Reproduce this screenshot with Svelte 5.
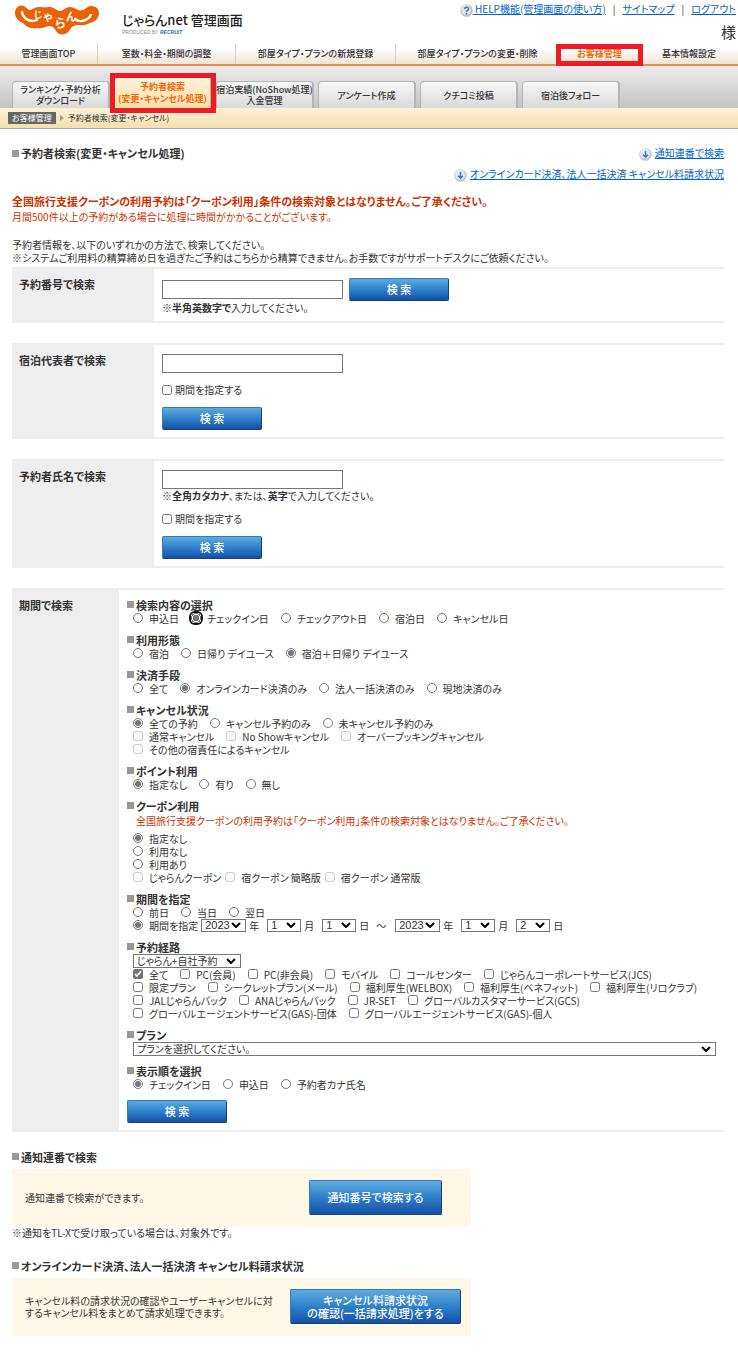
<script>
  // グローバルナビ
  const navItems = [
    { label: '管理画面TOP' },
    { label: '室数・料金・期間の調整' },
    { label: '部屋タイプ・プランの新規登録' },
    { label: '部屋タイプ・プランの変更・削除' },
    { label: 'お客様管理', current: true },
    { label: '基本情報設定' }
  ];

  // お客様管理のタブ
  const tabs = [
    { lines: ['ランキング・予約分析', 'ダウンロード'] },
    { lines: ['予約者検索', '(変更・キャンセル処理)'], current: true },
    { lines: ['宿泊実績(NoShow処理)', '入金管理'] },
    { lines: ['アンケート作成'] },
    { lines: ['クチコミ投稿'] },
    { lines: ['宿泊後フォロー'] }
  ];

  let target = $state('チェックイン日');
  let usage = $state('宿泊＋日帰り デイユース');
  let payment = $state('オンラインカード決済のみ');
  let cancel = $state('全ての予約');
  let point = $state('指定なし');
  let coupon = $state('指定なし');
  let period = $state('期間を指定');
  let order = $state('チェックイン日');

  const targets = ['申込日', 'チェックイン日', 'チェックアウト日', '宿泊日', 'キャンセル日'];
  const usages = ['宿泊', '日帰り デイユース', '宿泊＋日帰り デイユース'];
  const payments = ['全て', 'オンラインカード決済のみ', '法人一括決済のみ', '現地決済のみ'];
  const cancels = ['全ての予約', 'キャンセル予約のみ', '未キャンセル予約のみ'];
  const cancelTypes = [
    ['通常キャンセル', 'No Showキャンセル', 'オーバーブッキングキャンセル'],
    ['その他の宿責任によるキャンセル']
  ];
  const points = ['指定なし', '有り', '無し'];
  const coupons = ['指定なし', '利用なし', '利用あり'];
  const couponTypes = ['じゃらんクーポン', '宿クーポン 簡略版', '宿クーポン 通常版'];
  const orders = ['チェックイン日', '申込日', '予約者カナ氏名'];
  const routes = [
    ['全て', 'PC(会員)', 'PC(非会員)', 'モバイル', 'コールセンター', 'じゃらんコーポレートサービス(JCS)'],
    ['限定プラン', 'シークレットプラン(メール)', '福利厚生(WELBOX)', '福利厚生(ベネフィット)', '福利厚生(リロクラブ)'],
    ['JALじゃらんパック', 'ANAじゃらんパック', 'JR-SET', 'グローバルカスタマーサービス(GCS)'],
    ['グローバルエージェントサービス(GAS)-団体', 'グローバルエージェントサービス(GAS)-個人']
  ];

  const range = (n) => Array.from({ length: n }, (_, i) => i + 1);
</script>

{#snippet arrowIcon()}
  <svg class="ball" viewBox="0 0 13 13" aria-hidden="true">
    <circle cx="6.5" cy="6.5" r="6.3" fill="#c8c8c8" />
    <circle cx="6" cy="5.7" r="5" fill="#e8e8e8" />
    <path d="M6.5 3v6M4 6.8l2.5 2.4L9 6.8" fill="none" stroke="#2a78c8" stroke-width="1.5" />
  </svg>
{/snippet}

{#snippet dateSelects(name, day)}
  <select class="year" aria-label="{name}年"><option>2023</option><option>2024</option></select>
  <span class="unit">年</span>
  <select class="md" aria-label="{name}月">{#each range(12) as m}<option>{m}</option>{/each}</select>
  <span class="unit">月</span>
  <select class="md" aria-label="{name}日" value={day}>{#each range(31) as d}<option value={d}>{d}</option>{/each}</select>
  <span>日</span>
{/snippet}

<header>
  <div class="top">
    <svg class="logo" viewBox="0 0 84 30" role="img" aria-label="じゃらん">
      <path
        d="M0 8C0 2 5-1 9 1C12 3 13 5 15 5C18 5 19 2 24 2C28 2 30 3 33 2C38 1 41 6 45 6C49 6 50 2 55 2C60 2 63 7 68 5C71 4 72 1 76 1C81 1 84 4 84 8C84 14 79 17 75 18C70 21 66 20 62 20C57 21 56 23 54 26C51 30 44 31 41 26C39 22 37 21 34 21C29 22 27 24 22 23C16 24 11 22 8 18C3 16 0 12 0 8Z"
        fill="#ec6105" />
      <path d="M7 7C8 13 14 18 22 15M60 14C65 18 72 16 76 10" fill="none" stroke="#fff" stroke-width="2.400" stroke-linecap="round" />
      <text x="19" y="13" font-size="9">じ</text>
      <text x="28" y="16" font-size="11">ゃ</text>
      <text x="40" y="23" font-size="12">ら</text>
      <text x="51" y="16" font-size="11">ん</text>
    </svg>
    <div class="title">
      <p class="site">じゃらんnet 管理画面</p>
      <p class="by">PRODUCED BY <b>RECRUIT</b></p>
    </div>
    <div class="util">
      <ul>
        <li>
          <svg class="ball" viewBox="0 0 13 13" aria-hidden="true">
            <circle cx="6.5" cy="6.5" r="6.3" fill="#bcc2c8" />
            <circle cx="6" cy="5.7" r="5" fill="#e0e4e7" />
            <path d="M4.600 5C4.600 2.600 8.500 2.600 8.500 5C8.500 6.500 6.500 6.400 6.500 8M6.500 9v1.500" fill="none" stroke="#3a7fc0" stroke-width="1.500" />
          </svg><a href="#help">&nbsp;HELP機能(管理画面の使い方)</a>
        </li>
        <li><a href="#sitemap">サイトマップ</a></li>
        <li><a href="#logout">ログアウト</a></li>
      </ul>
      <p class="user">様</p>
    </div>
  </div>

  <nav class="global">
    {#each navItems as item}
      <a href="#nav" class:current={item.current}>{item.label}</a>
    {/each}
  </nav>

  <nav class="tabs">
    {#each tabs as tab}
      <a href="#tab" class:current={tab.current}>
        {#each tab.lines as line}<span>{line}</span>{/each}
      </a>
    {/each}
  </nav>

  <div class="crumbs">
    <b>お客様管理</b>
    <svg viewBox="0 0 4 6" aria-hidden="true"><path d="M0 0L4 3L0 6Z" fill="#999" /></svg>
    <span>予約者検索(変更・キャンセル)</span>
  </div>
</header>

<main>
  <div class="head">
    <h1 class="mark">予約者検索(変更・キャンセル処理)</h1>
    <ul class="jump">
      <li>{@render arrowIcon()}<a href="#notice">通知連番で検索</a></li>
      <li>{@render arrowIcon()}<a href="#charge">オンラインカード決済、法人一括決済 キャンセル料請求状況</a></li>
    </ul>
  </div>

  <p class="alert strong">全国旅行支援クーポンの利用予約は「クーポン利用」条件の検索対象とはなりません。ご了承ください。</p>
  <p class="alert">月間500件以上の予約がある場合に処理に時間がかかることがございます。</p>
  <p class="lead">予約者情報を、以下のいずれかの方法で、検索してください。<br />※システムご利用料の精算締め日を過ぎたご予約はこちらから精算できません。お手数ですがサポートデスクにご依頼ください。</p>

  <section class="box">
    <h2><label for="number">予約番号で検索</label></h2>
    <div class="cell">
      <div class="line">
        <input type="text" id="number" />
        <button class="btn">検 索</button>
      </div>
      <p class="note">※<b>半角英数字で</b>入力してください。</p>
    </div>
  </section>

  <section class="box">
    <h2><label for="guest">宿泊代表者で検索</label></h2>
    <div class="cell">
      <input type="text" id="guest" />
      <label class="limit"><input type="checkbox" />期間を指定する</label>
      <button class="btn">検 索</button>
    </div>
  </section>

  <section class="box">
    <h2><label for="booker">予約者氏名で検索</label></h2>
    <div class="cell">
      <input type="text" id="booker" />
      <p class="note">※<b>全角カタカナ</b>、または、<b>英字</b>で入力してください。</p>
      <label class="limit"><input type="checkbox" />期間を指定する</label>
      <button class="btn">検 索</button>
    </div>
  </section>

  <section class="box period">
    <h2>期間で検索</h2>
    <div class="cell">
      <h3 class="mark">検索内容の選択</h3>
      <div class="row">
        {#each targets as t}
          <label class:focused={t === target}><input type="radio" name="target" value={t} bind:group={target} />{t}</label>
        {/each}
      </div>

      <h3 class="mark">利用形態</h3>
      <div class="row">
        {#each usages as u}
          <label><input type="radio" name="usage" value={u} bind:group={usage} />{u}</label>
        {/each}
      </div>

      <h3 class="mark">決済手段</h3>
      <div class="row">
        {#each payments as p}
          <label><input type="radio" name="payment" value={p} bind:group={payment} />{p}</label>
        {/each}
      </div>

      <h3 class="mark">キャンセル状況</h3>
      <div class="row">
        {#each cancels as c}
          <label><input type="radio" name="cancel" value={c} bind:group={cancel} />{c}</label>
        {/each}
      </div>
      {#each cancelTypes as row}
        <div class="row">
          {#each row as c}
            <label><input type="checkbox" disabled />{c}</label>
          {/each}
        </div>
      {/each}

      <h3 class="mark">ポイント利用</h3>
      <div class="row">
        {#each points as p}
          <label><input type="radio" name="point" value={p} bind:group={point} />{p}</label>
        {/each}
      </div>

      <h3 class="mark">クーポン利用</h3>
      <p class="alert inner">全国旅行支援クーポンの利用予約は「クーポン利用」条件の検索対象とはなりません。ご了承ください。</p>
      {#each coupons as c}
        <div class="row">
          <label><input type="radio" name="coupon" value={c} bind:group={coupon} />{c}</label>
        </div>
      {/each}
      <div class="row tight">
        {#each couponTypes as c}
          <label><input type="checkbox" disabled />{c}</label>
        {/each}
      </div>

      <h3 class="mark">期間を指定</h3>
      <div class="row">
        {#each ['前日', '当日', '翌日'] as d}
          <label><input type="radio" name="period" value={d} bind:group={period} />{d}</label>
        {/each}
      </div>
      <div class="row dates">
        <label><input type="radio" name="period" value="期間を指定" bind:group={period} />期間を指定</label>
        {@render dateSelects('開始', 1)}
        <span class="tilde">～</span>
        {@render dateSelects('終了', 2)}
      </div>

      <h3 class="mark">予約経路</h3>
      <select class="route" aria-label="予約経路"><option>じゃらん+自社予約</option></select>
      {#each routes as row}
        <div class="row">
          {#each row as r}
            <label><input type="checkbox" checked={r === '全て'} />{r}</label>
          {/each}
        </div>
      {/each}

      <h3 class="mark">プラン</h3>
      <select class="plan" aria-label="プラン"><option>プランを選択してください。</option></select>

      <h3 class="mark">表示順を選択</h3>
      <div class="row">
        {#each orders as o}
          <label><input type="radio" name="order" value={o} bind:group={order} />{o}</label>
        {/each}
      </div>
      <button class="btn">検 索</button>
    </div>
  </section>

  <h2 class="mark sub" id="notice">通知連番で検索</h2>
  <div class="panel">
    <p>通知連番で検索ができます。</p>
    <button class="btn notice">通知番号で検索する</button>
  </div>
  <p class="after">※通知をTL-Xで受け取っている場合は、対象外です。</p>

  <h2 class="mark sub" id="charge">オンラインカード決済、法人一括決済 キャンセル料請求状況</h2>
  <div class="panel">
    <p>キャンセル料の請求状況の確認やユーザーキャンセルに対するキャンセル料をまとめて請求処理できます。</p>
    <button class="btn charge">キャンセル料請求状況<br />の確認(一括請求処理)をする</button>
  </div>
</main>

<style>
  :global(body) {
    background: #fff;
    color: #333;
    font: 10px/12px "Noto Sans CJK JP", sans-serif;
    font-feature-settings: "palt";
  }

  h1, h2, h3, p, ul {
    margin: 0;
    padding: 0;
  }

  ul {
    list-style: none;
  }

  a {
    color: #0066cc;
  }

  input, select, button {
    box-sizing: border-box;
    margin: 0;
    font-family: inherit;
    font-feature-settings: inherit;
    accent-color: #757575;
  }

  .ball {
    width: 13px;
    height: 13px;
    vertical-align: middle;
  }

  /* ヘッダー */
  .top {
    display: flex;
    align-items: flex-start;
    height: 44px;
    padding: 0 2px 0 15px;
  }

  .logo {
    width: 84px;
    height: 30px;
    margin-top: 5px;
  }

  .logo text {
    fill: #fff;
    font-weight: 700;
  }

  .title {
    margin: 12px 0 0 23px;
  }

  .site {
    color: #222;
    font-size: 13px;
    font-weight: 500;
    line-height: 16px;
  }

  .by {
    color: #888;
    font: 5px/9px "Liberation Sans", sans-serif;
  }

  .by b {
    color: #1a6fb5;
    font-style: italic;
  }

  .util {
    margin-left: auto;
    padding-top: 2px;
    text-align: right;
  }

  .util ul {
    display: flex;
    line-height: 14px;
  }

  .util li + li::before {
    content: "|";
    margin: 0 7px;
  }

  .user {
    margin-top: 7px;
    font-size: 15px;
    line-height: 16px;
  }

  .global {
    display: grid;
    grid-template-columns: 97fr 138fr 160fr 164fr 80fr 99fr;
    border-bottom: 2px solid #f08848;
  }

  .global a {
    border-left: 1px solid #d8cfba;
    background: linear-gradient(#fff 20%, #ece6d8);
    color: #333;
    font-size: 9px;
    font-weight: 500;
    line-height: 20px;
    text-align: center;
    text-decoration: none;
    white-space: nowrap;
  }

  .global a:first-child {
    border-left: 0;
  }

  .global a.current {
    position: relative;
    background: linear-gradient(#fff 30%, #fcd9bd);
    color: #f26a10;
    font-weight: 700;
  }

  .current::after {
    content: "";
    position: absolute;
    inset: 0 -4px -2px;
    border: 5px solid #ed1c24;
  }

  .tabs {
    display: flex;
    align-items: flex-end;
    gap: 4px;
    height: 42px;
    padding: 0 12px;
    background: linear-gradient(#ececec, #c4c4c4);
  }

  .tabs a {
    position: relative;
    box-sizing: border-box;
    display: flex;
    flex: 0 1 98px;
    flex-direction: column;
    align-items: center;
    justify-content: center;
    min-width: 0;
    height: 27px;
    border: 1px solid #b5b5b5;
    border-width: 1px 2px 0 1px;
    border-radius: 4px 4px 0 0;
    background: linear-gradient(#f8f8f8, #d9d9d9);
    color: #333;
    font-size: 9px;
    font-weight: 500;
    line-height: 11px;
    text-decoration: none;
    white-space: nowrap;
  }

  .tabs a.current {
    height: 32px;
    background: linear-gradient(#fff3dc, #fbdfa8);
    color: #f26a10;
    font-weight: 700;
    line-height: 12px;
  }

  .tabs .current::after {
    inset: -4px -6px -5px -5px;
  }

  .crumbs {
    display: flex;
    align-items: center;
    gap: 4px;
    height: 20px;
    padding-left: 8px;
    border-bottom: 1px solid #aaa;
    background: linear-gradient(#fdf1d6, #f3dfae);
    font-size: 8px;
  }

  .crumbs b {
    padding: 0 4px;
    background: #666;
    color: #fff;
    font-weight: 400;
  }

  .crumbs svg {
    width: 4px;
    height: 6px;
  }

  /* 本文 */
  main {
    padding: 17px 14px 30px 12px;
  }

  .mark {
    display: flex;
    align-items: center;
    gap: 2px;
    font-size: 11px;
    font-weight: 700;
    line-height: 14px;
  }

  .mark::before {
    content: "";
    width: 7px;
    height: 7px;
    background: #999;
  }

  .head {
    display: flex;
    justify-content: space-between;
    align-items: flex-start;
  }

  .jump {
    text-align: right;
  }

  .jump li {
    margin-bottom: 6px;
    line-height: 14px;
  }

  .jump a {
    margin-left: 3px;
  }

  .alert {
    color: #cc3300;
    line-height: 16px;
  }

  .alert.strong {
    margin-top: 5px;
    font-size: 11px;
    font-weight: 700;
  }

  .alert.inner {
    padding: 0 0 3px 9px;
  }

  .lead {
    margin: 13px 0 3px;
    line-height: 13px;
  }

  .box {
    display: grid;
    grid-template-columns: 142px 1fr;
    margin-bottom: 20px;
    border: 2px solid #eee;
    border-width: 2px 0;
  }

  .box.period {
    grid-template-columns: 107px 1fr;
    margin-bottom: 18px;
  }

  .box h2 {
    padding: 8px 7px;
    background: #eee;
    font-size: 11px;
    line-height: 14px;
  }

  .cell {
    padding: 9px 8px 7px;
  }

  .line {
    display: flex;
    align-items: center;
    gap: 6px;
  }

  .note {
    line-height: 13px;
  }

  input[type="text"] {
    display: block;
    width: 181px;
    height: 19px;
    border: 1px solid #767676;
    background: #fff;
  }

  input[type="radio"], input[type="checkbox"] {
    width: 10px;
    height: 10px;
  }

  .limit {
    display: flex;
    align-items: center;
    gap: 3px;
    margin: 11px 0;
  }

  .btn {
    display: block;
    width: 100px;
    height: 23px;
    padding: 0;
    border: 1px solid #2a7cc8;
    border-right-color: #173f6d;
    border-bottom-color: #173f6d;
    border-radius: 2px;
    background: linear-gradient(#5fabdf, #2f80c9 50%, #1550a8);
    color: #fff;
    font-size: 11px;
    font-weight: 500;
    line-height: 13px;
  }

  .period .cell {
    padding: 8px 8px 7px;
  }

  .period h3 {
    margin-top: 8px;
  }

  .period h3:first-child {
    margin-top: 0;
  }

  .row {
    display: flex;
    flex-wrap: wrap;
    gap: 0 12px;
    margin-left: 6px;
    line-height: 13px;
  }

  .row.tight {
    gap: 0 4px;
  }

  .row label {
    display: flex;
    align-items: center;
    gap: 6px;
  }

  .focused input {
    appearance: none;
    border-radius: 4px;
    background: radial-gradient(circle, #757575 0 3px, #fff 3px 4px, #757575 4px 5px, #fff 5px);
    box-shadow: 0 0 0 2px #111;
  }

  .row.dates {
    align-items: center;
    gap: 0 3px;
  }

  .unit {
    margin-right: 5px;
  }

  .tilde {
    margin: 0 6px 0 4px;
  }

  select {
    height: 14px;
    padding: 0 14px 0 3px;
    border: 1px solid #767676;
    border-radius: 0;
    appearance: none;
    background: #fff url("data:image/svg+xml,%3Csvg xmlns='http://www.w3.org/2000/svg' viewBox='0 0 10 6'%3E%3Cpath d='M1 1l4 4 4-4' fill='none' stroke='%23000' stroke-width='2'/%3E%3C/svg%3E") no-repeat right 4px center / 10px 6px;
    color: #333;
    font-size: 10px;
    line-height: 12px;
  }

  .year, .md {
    height: 13px;
    font-family: "Liberation Sans", sans-serif;
    font-size: 11px;
    line-height: 11px;
  }

  .year {
    width: 45px;
  }

  .md {
    width: 34px;
  }

  .route, .plan {
    display: block;
    margin-left: 6px;
  }

  .route {
    width: 108px;
  }

  .plan {
    width: calc(100% - 6px);
  }

  .period .btn {
    margin-top: 9px;
  }

  .panel {
    box-sizing: border-box;
    display: flex;
    align-items: center;
    justify-content: space-between;
    max-width: 459px;
    height: 58px;
    margin-top: 5px;
    padding: 0 10px 0 13px;
    background: #fff8e8;
  }

  .panel p {
    max-width: 253px;
  }

  .panel .btn {
    height: 35px;
  }

  .panel .notice {
    width: 133px;
    margin-right: 19px;
  }

  .panel .charge {
    width: 171px;
  }

  .after {
    margin: 0 0 20px;
  }
</style>
